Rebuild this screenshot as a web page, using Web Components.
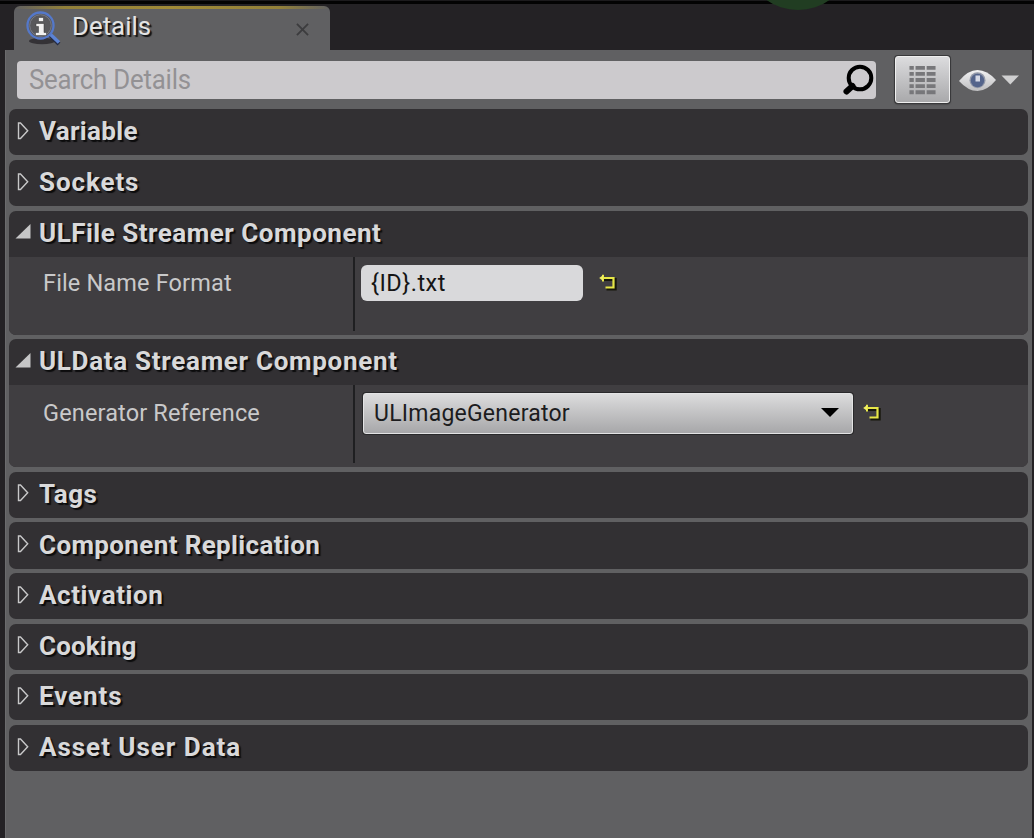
<!DOCTYPE html>
<html lang="en">
<head>
<meta charset="utf-8">
<title>Details</title>
<style>
html,body{margin:0;height:100%;overflow:hidden;background:#242225}
body{font-family:Roboto,"Liberation Sans",sans-serif}
</style>
</head>
<body>
<details-window></details-window>
<script>
const define = (name, html) => {
  const t = document.createElement('template');
  t.innerHTML = html;
  customElements.define(name, class extends HTMLElement {
    constructor() {
      super();
      this.attachShadow({ mode: 'open' }).append(t.content.cloneNode(true));
    }
  });
};

define('panel-tab', `
<style>
:host{box-sizing:border-box;display:flex;align-items:center;width:316px;height:44px;margin-left:14px;padding:0 21px 2px 11px;border-radius:6px 6px 0 0;
 background:linear-gradient(90deg,#8a753000,#92803a 16%,#a08a38 50%,#92803a 84%,#8a753000) 0 0/100% 3px no-repeat,#606062;color:#e4e4e4}
.t{font-size:26.5px;line-height:40px;margin:-2px 0 0 9px;flex:1;text-shadow:2px 2px 1px #111;transform:scaleX(.975);transform-origin:0 50%;white-space:nowrap}
svg{display:block;flex:none}
</style>
<svg width="38" height="40" viewBox="0 0 38 40">
 <ellipse cx="17" cy="34" rx="13" ry="3.2" fill="#29272c" opacity=".8"/>
 <path d="M25 28l9 9" stroke="#252b42" stroke-width="4"/>
 <path d="M24 26l10 9.500" stroke="#5c83d4" stroke-width="3.500"/>
 <circle cx="15.500" cy="18.500" r="13" fill="#58585b" stroke="#5478c9" stroke-width="2.300"/>
 <circle cx="15.500" cy="18.500" r="10.800" fill="none" stroke="#777b87" stroke-width="1"/>
 <path d="M13.500 10.500h5v4h-5zM11 16.500h8v9h2.500v3H10.500v-3H13.500v-6H11z" fill="#f0f0f0" stroke="#333" stroke-width=".5"/>
</svg>
<span class="t"><slot></slot></span>
<svg width="13" height="13" viewBox="0 0 14 14" style="margin-top:4px"><path d="M1 1l12 12M13 1L1 13" stroke="#3c3c3e" stroke-width="2"/></svg>
`);

define('search-box', `
<style>
:host{box-sizing:border-box;display:flex;align-items:center;justify-content:space-between;width:859px;height:38px;padding:0 1px 0 12px;border-radius:4px;background:#cccacd;color:#939194}
span{font-size:27px;line-height:38px;letter-spacing:-.2px;transform:scaleX(.955);transform-origin:0 50%}
svg{display:block}
</style>
<span><slot></slot></span>
<svg width="34" height="34" viewBox="0 0 34 34"><circle cx="19" cy="15" r="11.300" fill="none" stroke="#000" stroke-width="4"/><path d="M11.500 23L5.500 28.500" stroke="#000" stroke-width="6" stroke-linecap="round"/></svg>
`);

define('matrix-button', `
<style>
:host{box-sizing:border-box;display:flex;align-items:center;justify-content:center;width:55px;height:47px;border:1px solid #efefef;border-radius:3px;background:linear-gradient(#dcdcde,#a9a9ab);box-shadow:0 0 0 1px #39393b,0 1px 2px #222}
svg{display:block}
</style>
<svg width="29" height="32" viewBox="0 0 30 32"><path d="M1.500 3.500h27M1.500 9.700h27M1.500 16h27M1.500 22.400h27M1.500 28.700h27" stroke="#77777a" stroke-width="4" stroke-dasharray="4.500 1.800 9.700 1.800 9.700"/></svg>
`);

define('view-options', `
<style>:host{display:block}svg{display:block}</style>
<svg width="66" height="28" viewBox="0 0 66 28">
 <defs><linearGradient id="e" x2="0" y2="1"><stop stop-color="#f2f2f3"/><stop offset="1" stop-color="#bdbdbf"/></linearGradient></defs>
 <path d="M1 15Q10 4 19.500 4T38 14Q29 25 19.500 25T1 15z" fill="url(#e)"/>
 <circle cx="19.500" cy="14.200" r="8" fill="#9298a8"/><circle cx="19.500" cy="14.500" r="6.700" fill="#54648b"/>
 <path d="M17.500 9.500h4.500v6h-4.500z" fill="#d5d9e6"/>
 <path d="M43.500 9.500h17.500L52.300 18.500z" fill="#cfcfd0"/>
</svg>
`);

define('reset-icon', `
<style>:host{display:block}svg{display:block;overflow:visible}</style>
<svg width="20" height="20" viewBox="0 0 20 20" fill="none">
 <path d="M5 6.500H16.200V16H7.500" stroke="#17170c" stroke-width="3"/>
 <path d="M2 5H14.500V14.500H6.500" stroke="#e6e647" stroke-width="2.200"/><path d="M4 1.700V8.500" stroke="#e6e647" stroke-width="2"/>
 <path d="M.2 5L4 2.300V7.700z" fill="#f0f064"/>
</svg>
`);

define('value-box', `
<style>:host{box-sizing:border-box;display:block;width:222px;height:36px;padding-left:10px;border-radius:6px;background:#d9d9db;color:#151515;font-size:23.500px;line-height:36px;letter-spacing:.5px}</style><slot></slot>
`);

define('combo-button', `
<style>
:host{box-sizing:border-box;display:flex;align-items:center;justify-content:space-between;width:490px;height:41px;padding:0 13px 0 10px;border:1px solid #e3e3e4;border-radius:3px;background:linear-gradient(#dcdcdd,#a7a7a9);box-shadow:0 0 0 1px #29292b;color:#1c1c1e;font-size:23px;letter-spacing:.23px}
svg{margin-top:-1px}
</style>
<span><slot></slot></span><svg width="18" height="10" viewBox="0 0 18 10"><path d="M0 0h18L9 9z" fill="#000"/></svg>
`);

define('property-row', `
<style>
:host{box-sizing:border-box;display:grid;grid-template-columns:346px 1fr;height:var(--h);padding-bottom:4px;background:#403e41}
.n{padding:var(--np) 0 0 34px;font-size:23.500px;line-height:36px;color:#c9c9ca;letter-spacing:.15px;border-right:2px solid #1f1f21;white-space:nowrap}
.v{display:flex;align-items:center;height:var(--vh);padding:7px 0 0 var(--vp);gap:var(--gap)}
</style>
<div class="n"><slot name="name"></slot></div><div class="v"><slot></slot></div>
`);

customElements.define('detail-category', class extends HTMLElement {
  constructor() {
    super();
    const open = this.hasAttribute('open');
    this.attachShadow({ mode: 'open' }).innerHTML = `
<style>
:host{display:block;border-radius:7px;overflow:hidden;background:#323033}
.h{display:flex;align-items:center;height:46.200px;color:#d9d9da;font-size:26px;font-weight:700}
svg{display:block;flex:none;width:30px;height:30px;margin-top:-3px}
.t{line-height:44px;margin-top:-2px;letter-spacing:var(--ls,0);text-shadow:2px 2px 1px #0c0c0d;white-space:nowrap}
</style>
<div class="h"><svg viewBox="0 0 30 30">${open
  ? '<path d="M6.500 21.500H21.500V7z" fill="#c6c6c7"/>'
  : '<path d="M9.500 7V22.500H11.500L18.700 14.700 11.500 7z" fill="none" stroke="#c8c8c9" stroke-width="1.400"/>'}</svg><span class="t">${this.getAttribute('label')}</span></div><slot></slot>`;
  }
});

define('details-window', `
<style>
:host{display:block;position:relative;width:1034px;height:838px;overflow:hidden;background:#242225}
.orb{position:absolute;left:753px;top:-60px;width:90px;height:70px;border-radius:50%;background:#213d22}
.strip{box-sizing:border-box;height:50px;padding-top:6px;background:linear-gradient(#1c1b1d 0 1px,#030303 1px 4px,transparent 4px)}
.panel{box-sizing:border-box;margin:0 2px 0 5px;height:788px;background:#606062;border-left:1px solid #6b6b6d;padding:0 4px 0 3px}
.tools{display:flex;align-items:center;height:59.300px;padding-left:8px;box-sizing:border-box}
matrix-button{margin:0 8px 0 19px}
.list{display:flex;flex-direction:column;gap:4.450px;width:1019px}
</style>
<div class="orb"></div>
<div class="strip"><panel-tab>Details</panel-tab></div>
<div class="panel">
 <div class="tools"><search-box>Search Details</search-box><matrix-button></matrix-button><view-options></view-options></div>
 <div class="list">
  <detail-category label="Variable" style="--ls:.32px"></detail-category>
  <detail-category label="Sockets" style="--ls:.9px"></detail-category>
  <detail-category label="ULFile Streamer Component" style="--ls:.5px" open>
   <property-row style="--h:78px;--vh:38px;--vp:6px;--gap:16px;--np:8px"><span slot="name">File Name Format</span><value-box>{ID}.txt</value-box><reset-icon></reset-icon></property-row>
  </detail-category>
  <detail-category label="ULData Streamer Component" style="--ls:.7px" open>
   <property-row style="--h:82px;--vh:42px;--vp:8px;--gap:10px;--np:9.5px"><span slot="name">Generator Reference</span><combo-button>ULImageGenerator</combo-button><reset-icon></reset-icon></property-row>
  </detail-category>
  <detail-category label="Tags" style="--ls:.55px"></detail-category>
  <detail-category label="Component Replication" style="--ls:.37px"></detail-category>
  <detail-category label="Activation" style="--ls:.6px"></detail-category>
  <detail-category label="Cooking" style="--ls:.15px"></detail-category>
  <detail-category label="Events" style="--ls:.9px"></detail-category>
  <detail-category label="Asset User Data" style="--ls:.98px"></detail-category>
 </div>
</div>
`);
</script>
</body>
</html>
